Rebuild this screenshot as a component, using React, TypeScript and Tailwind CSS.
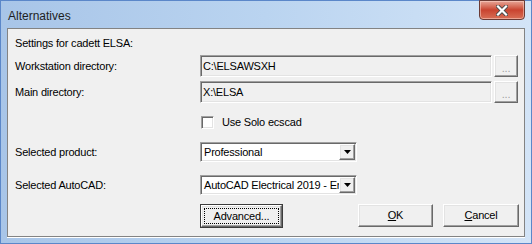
const raised =
  'bg-[#f0f0f0] border border-t-white border-l-white border-r-[#696969] border-b-[#696969] shadow-[inset_-1px_-1px_0_#a0a0a0,inset_1px_1px_0_#e3e3e3]';
const sunken =
  'border border-t-[#a0a0a0] border-l-[#a0a0a0] border-r-white border-b-white shadow-[inset_1px_1px_0_#696969,inset_-1px_-1px_0_#e3e3e3]';

function PathField({ value }: { value: string }) {
  return (
    <div className="flex h-[22px] items-stretch gap-[2px]">
      <div className={`${sunken} flex w-[292px] items-center bg-[#f0f0f0] pl-[2px] text-black`}>{value}</div>
      <div className={`${raised} flex w-[24px] items-center justify-center pt-[4px] text-[#a0a0a0]`}>...</div>
    </div>
  );
}

function Combo({ value }: { value: string }) {
  return (
    <div className={`${sunken} flex h-[20px] w-[157px] items-center bg-white pr-[1px]`}>
      <div className="flex-1 overflow-hidden whitespace-nowrap pl-[3px]">{value}</div>
      <div className={`${raised} flex h-[16px] w-[16px] shrink-0 items-center justify-center`}>
        <svg width="7" height="4" viewBox="0 0 7 4">
          <path d="M0 0H7L3.5 4Z" fill="#000" />
        </svg>
      </div>
    </div>
  );
}

function Row({ label, children, className = '' }: { label?: string; children: React.ReactNode; className?: string }) {
  return (
    <div className={`flex items-center ${className}`}>
      <div className="w-[185px] shrink-0">{label}</div>
      {children}
    </div>
  );
}

export default function App() {
  return (
    <div className="flex h-[244px] w-[532px] flex-col border border-[#5b87c9] bg-gradient-to-r from-[#a8c5e8] via-[#bad4f0] to-[#d3e4f7] font-['Liberation_Sans',Arial,sans-serif] text-[11px] tracking-[-0.2px] text-black">
      <div className="flex h-[27px] shrink-0 items-start justify-between pl-[7px] pr-[6px]">
        <span className="mt-[6px] text-[12px] tracking-normal text-[#1e1e1e]">Alternatives</span>
        <div className="-mt-px flex h-[20px] w-[46px] items-center justify-center rounded-b-[4px] border border-[#6b3a34] bg-gradient-to-b from-[#e6a597] via-[#c9432f] to-[#d86e55] shadow-[inset_0_0_0_1px_rgba(255,220,210,0.5)]">
          <svg width="12" height="11" viewBox="0 0 12 11">
            <path d="M2 1.5L10 9.5M10 1.5L2 9.5" stroke="#4a4a4a" strokeWidth="4" strokeLinecap="square" />
            <path d="M2 1.5L10 9.5M10 1.5L2 9.5" stroke="#ffffff" strokeWidth="2.2" strokeLinecap="square" />
          </svg>
        </div>
      </div>

      <div className="flex flex-1 px-[6px] pb-[6px]">
        <div className="flex flex-1 flex-col border border-[#838383] bg-[#f0f0f0] pl-[7px] pr-[5px] shadow-[0_1px_0_#ffffff]">
          <div className="mt-[4px] flex h-[20px] items-center">Settings for cadett ELSA:</div>

          <Row label="Workstation directory:" className="mt-[2px]">
            <PathField value="C:\ELSAWSXH" />
          </Row>
          <Row label="Main directory:" className="mt-[4px]">
            <PathField value="X:\ELSA" />
          </Row>

          <Row className="mt-[13px] h-[13px]">
            <div className="ml-[1px] flex items-center gap-[8px]">
              <div className="h-[13px] w-[13px] border border-t-[#a0a0a0] border-l-[#a0a0a0] border-r-white border-b-white bg-white shadow-[inset_1px_1px_0_#696969,inset_-1px_-1px_0_#e3e3e3]" />
              <span>Use Solo ecscad</span>
            </div>
          </Row>

          <Row label="Selected product:" className="mt-[13px]">
            <Combo value="Professional" />
          </Row>
          <Row label="Selected AutoCAD:" className="mt-[13px]">
            <Combo value="AutoCAD Electrical 2019 - En" />
          </Row>

          <div className="mt-[9px] flex h-[24px] items-start pl-[185px]">
            <div className="flex h-[24px] w-[83px] border border-[#3c3c3c] p-0">
              <div className={`${raised} flex flex-1 items-center justify-center p-[2px]`}>
                <div className="flex h-full w-full items-center justify-center border border-dotted border-black">
                  Advanced...
                </div>
              </div>
            </div>
            <div className={`${raised} ml-[75px] flex h-[23px] w-[75px] items-center justify-center`}>
              <span>
                <span className="underline">O</span>K
              </span>
            </div>
            <div className={`${raised} ml-[10px] flex h-[23px] w-[76px] items-center justify-center`}>
              <span>
                <span className="underline">C</span>ancel
              </span>
            </div>
          </div>
        </div>
      </div>
    </div>
  );
}
